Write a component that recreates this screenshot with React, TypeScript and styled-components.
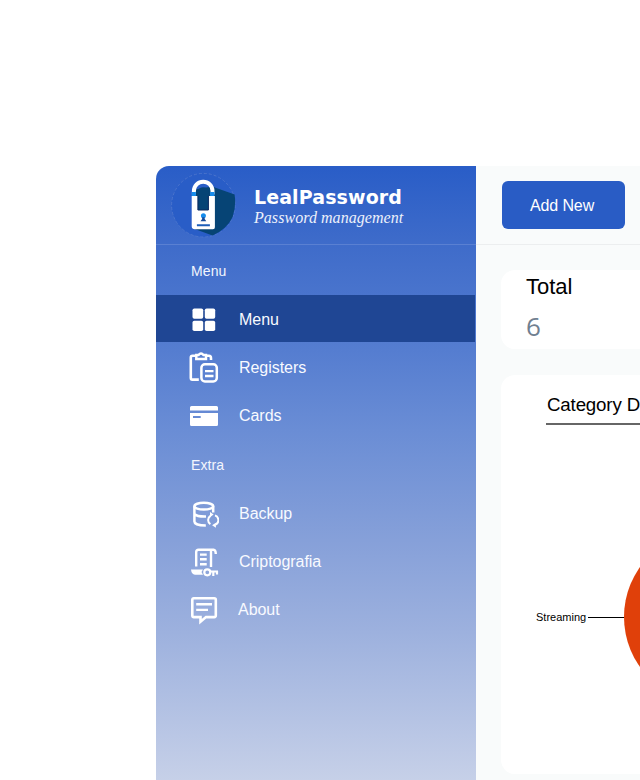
import React from "react";
import styled, { createGlobalStyle } from "styled-components";

const GlobalStyle = createGlobalStyle`
  * { box-sizing: border-box; }
  body { margin: 0; background: #fff; overflow: hidden; font-family: "Liberation Sans", Arial, sans-serif; }
`;

const Desktop = styled.div`
  height: 780px;
  padding: 166px 0 0 156px;
  overflow: hidden;
`;

const Window = styled.div`
  display: grid;
  grid-template-columns: 320px 1fr;
  height: 614px;
  overflow: hidden;
  border-top-left-radius: 13px;
  background: #f9fbfb;
`;

const Sidebar = styled.aside`
  background: linear-gradient(180deg, #295dc7 0%, #3f6cca 13%, #557dd0 30%, #6a8dd5 43%, #86a0d9 61%, #9db1de 76%, #c6d0e8 100%);
  color: #fff;
`;

const Brand = styled.header`
  display: flex;
  height: 79px;
  padding: 6px 0 0 14px;
  border-bottom: 1px solid #5a80d2;
`;

const BrandText = styled.div`
  padding: 14px 0 0 18px;
  white-space: nowrap;
`;

const BrandName = styled.div`
  font: bold 19px/22px "DejaVu Sans", sans-serif;
  letter-spacing: 0.1px;
`;

const Tagline = styled.div`
  font: italic 16px/20px "Liberation Serif", serif;
  letter-spacing: 0.05px;
  color: #edf1fb;
`;

const SectionTitle = styled.div`
  height: 50px;
  padding: 1px 0 0 35px;
  line-height: 51px;
  font-size: 14px;
  letter-spacing: 0.1px;
  color: #f3f6fd;
`;

const Item = styled.div<{ $active?: boolean }>`
  display: flex;
  align-items: center;
  height: ${(p) => (p.$active ? 47 : 48)}px;
  margin-bottom: ${(p) => (p.$active ? 1 : 0)}px;
  margin-right: 1px;
  padding-left: 33px;
  background: ${(p) => (p.$active ? "#1f4694" : "transparent")};
`;

const ItemLabel = styled.span<{ $gap?: number }>`
  padding: 2px 0 0 ${(p) => p.$gap ?? 20}px;
  font-size: 16px;
  line-height: 18px;
  letter-spacing: -0.04px;
  color: #f8faff;
`;

const Main = styled.main`
  min-width: 0;
`;

const Toolbar = styled.div`
  height: 79px;
  padding: 15px 0 0 26px;
  border-bottom: 1px solid #eceeef;
`;

const AddButton = styled.button`
  display: block;
  width: 123px;
  height: 48px;
  padding: 1px 3px 0 0;
  border: 0;
  border-radius: 6px;
  background: #295cc5;
  color: #fff;
  font: 16px "Liberation Sans", Arial, sans-serif;
  letter-spacing: -0.1px;
`;

const Content = styled.div`
  display: flex;
  flex-direction: column;
  gap: 26px;
  padding: 25px 0 0 25px;
`;

const Card = styled.section<{ $height: number }>`
  height: ${(p) => p.$height}px;
  border-radius: 14px 0 0 14px;
  background: #fff;
  overflow: hidden;
`;

const TotalLabel = styled.div`
  padding: 5px 0 0 25px;
  font-size: 22px;
  line-height: 24px;
  color: #000;
`;

const TotalValue = styled.div`
  padding: 11px 0 0 25px;
  font: 26px/32px "Open Sans", sans-serif;
  color: #708090;
`;

const ChartTitle = styled.h2`
  height: 50px;
  margin: 0 0 0 45px;
  padding: 19px 0 0 1px;
  border-bottom: 2px solid #666;
  font-size: 18.7px;
  font-weight: 400;
  line-height: 22px;
  letter-spacing: -0.15px;
  white-space: nowrap;
`;

const ChartRow = styled.div`
  display: flex;
  align-items: center;
  height: 172px;
  margin-top: 106px;
  padding-left: 35px;
`;

const ChartLabel = styled.span`
  flex: none;
  width: 52px;
  font-size: 11px;
  line-height: 14px;
  color: #000;
`;

const Chart = styled.svg`
  flex: none;
  display: block;
`;

const Icon = ({ children }: { children: React.ReactNode }) => (
  <svg width="30" height="32" viewBox="0 0 30 32" fill="none" stroke="#fff" strokeWidth="2.6">
    {children}
  </svg>
);

const Logo = () => (
  <svg width="66" height="67" viewBox="0 0 66 67" fill="none">
    <circle cx="33.4" cy="33.2" r="31.8" fill="#295dc7" stroke="#5279ce" strokeWidth=".8" strokeDasharray="3 2" />
    <path d="M42 14.5 64.6 22.5Q66.4 34 62.6 45Q57 57 42.5 63.5L22 56V18Z" fill="#064475" />
    <g transform="translate(.9 0)">
      <path d="M27 24V18.5a5.8 5.8 0 0 1 10.5 0V38H27Z" fill="#064475" />
      <path d="M23 22.5V19a9.3 9.3 0 0 1 18.6 0V22.5" stroke="#fff" strokeWidth="4" />
      <path d="M20.8 20H25v4.3h-4.2zm18.4 0h4.3v4.3h-4.3z" fill="#168cec" />
      <path d="M20.8 24H27v14h10.5V24H44v31.3q0 2-2 2H24q-3.2 0-3.2-3Z" fill="#fff" />
      <path d="M27 24V38H37.5V24" stroke="#0a265d" strokeWidth="1" />
      <circle cx="32.5" cy="43.7" r="2.5" fill="#168cec" />
      <path d="M31.2 45.3h2.6v1.7l1.6 2.3H29.6l1.6-2.3z" fill="#174c9b" />
      <path d="M26 53.2h13" stroke="#1d5eb9" strokeWidth="2" />
    </g>
  </svg>
);

const MenuIcon = () => (
  <Icon>
    <g fill="#fff" stroke="none">
      <rect x="3.5" y="5.5" width="10.7" height="10.3" rx="1.8" />
      <rect x="15.8" y="5.5" width="10.4" height="10.3" rx="1.8" />
      <rect x="3.5" y="17.8" width="10.7" height="10.3" rx="1.8" />
      <rect x="15.8" y="17.8" width="10.4" height="10.3" rx="1.8" />
    </g>
  </Icon>
);

const RegistersIcon = () => (
  <Icon>
    <path d="M9.8 28.6H3.3Q1.8 28.6 1.8 27V6.5Q1.8 4.8 3.5 4.8H7M17 4.8h3q2 0 2 2.4V9" />
    <path d="M7.3 4H9.5Q12 .8 14.5 4H17V8H7.3z" strokeWidth="2.5" />
    <rect x="12.4" y="13.3" width="15.4" height="17.2" rx="3.5" strokeWidth="2.5" />
    <path d="M16 20.2h8.5M16 25h8.5" strokeWidth="2.3" />
  </Icon>
);

const CardsIcon = () => (
  <Icon>
    <path d="M1 8.5Q1 7 2.5 7H27.5Q29 7 29 8.5V11.5H1ZM1 14H29V25.5Q29 27 27.5 27H2.5Q1 27 1 25.5ZM4 17V19H11.7V17Z" fill="#fff" fillRule="evenodd" stroke="none" />
  </Icon>
);

const BackupIcon = () => (
  <Icon>
    <ellipse cx="14.8" cy="9.2" rx="9.4" ry="3.4" strokeWidth="2.5" />
    <path d="M5.4 9.2V24.5c0 2.3 4.6 4 11.4 4M24.2 9.2V15.6M5.4 17c2 2 5.2 2.8 11.6 2.6" strokeWidth="2.5" />
    <path d="M21.4 27.2a5 5 0 0 1 0-8.4M26.6 27.6a5 5 0 0 0-.6-9.2" strokeWidth="2" />
    <path d="M24 17.6l3.6-2.7v5.4zM25.5 28.3l-3.8-2.6v5z" fill="#fff" stroke="none" transform="matrix(-1 0 0 1 48.6 0)" />
  </Icon>
);

const CryptoIcon = () => (
  <Icon>
    <path d="M7.2 21.5V7Q7.2 4.8 9.5 4.8H24.5Q26.8 5 26.8 9M22 6v16" strokeWidth="2.4" />
    <path d="M11 9.6h6.7M11 14.3h6.7M11 19.3h6.7" strokeWidth="2.4" />
    <path d="M2 24.5H14L12.5 27 14 29.7H6Q2.5 29.5 2 24.5Z" fill="#fff" stroke="none" />
    <circle cx="18.3" cy="27.3" r="3" strokeWidth="2.2" />
    <path d="M21.5 26.5H29M24.3 27v4M28 26v3.5" strokeWidth="2.2" />
  </Icon>
);

const AboutIcon = () => (
  <Icon>
    <path d="M4.8 5.3H25.2Q26.8 5.3 26.8 6.8V22.6Q26.8 24.1 25.2 24.1H17L11.5 28.7V24.1H4.8Q3.3 24.1 3.3 22.6V6.8Q3.3 5.3 4.8 5.3Z" strokeWidth="2.6" />
    <path d="M7.2 11.2H23M7.2 16.9H19" strokeWidth="2.4" />
  </Icon>
);

export default function App() {
  return (
    <>
      <GlobalStyle />
      <Desktop>
        <Window>
          <Sidebar>
            <Brand>
              <Logo />
              <BrandText>
                <BrandName>LealPassword</BrandName>
                <Tagline>Password management</Tagline>
              </BrandText>
            </Brand>
            <SectionTitle>Menu</SectionTitle>
            <Item $active><MenuIcon /><ItemLabel>Menu</ItemLabel></Item>
            <Item><RegistersIcon /><ItemLabel>Registers</ItemLabel></Item>
            <Item><CardsIcon /><ItemLabel>Cards</ItemLabel></Item>
            <SectionTitle>Extra</SectionTitle>
            <Item><BackupIcon /><ItemLabel>Backup</ItemLabel></Item>
            <Item><CryptoIcon /><ItemLabel>Criptografia</ItemLabel></Item>
            <Item><AboutIcon /><ItemLabel $gap={19}>About</ItemLabel></Item>
          </Sidebar>
          <Main>
            <Toolbar><AddButton>Add New</AddButton></Toolbar>
            <Content>
              <Card $height={79}>
                <TotalLabel>Total</TotalLabel>
                <TotalValue>6</TotalValue>
              </Card>
              <Card $height={399}>
                <ChartTitle>Category D</ChartTitle>
                <ChartRow>
                  <ChartLabel>Streaming</ChartLabel>
                  <Chart width="208" height="172" viewBox="0 0 208 172">
                    <path d="M0 86.5h37" stroke="#000" />
                    <circle cx="122" cy="86" r="86" fill="#e0400a" />
                  </Chart>
                </ChartRow>
              </Card>
            </Content>
          </Main>
        </Window>
      </Desktop>
    </>
  );
}
